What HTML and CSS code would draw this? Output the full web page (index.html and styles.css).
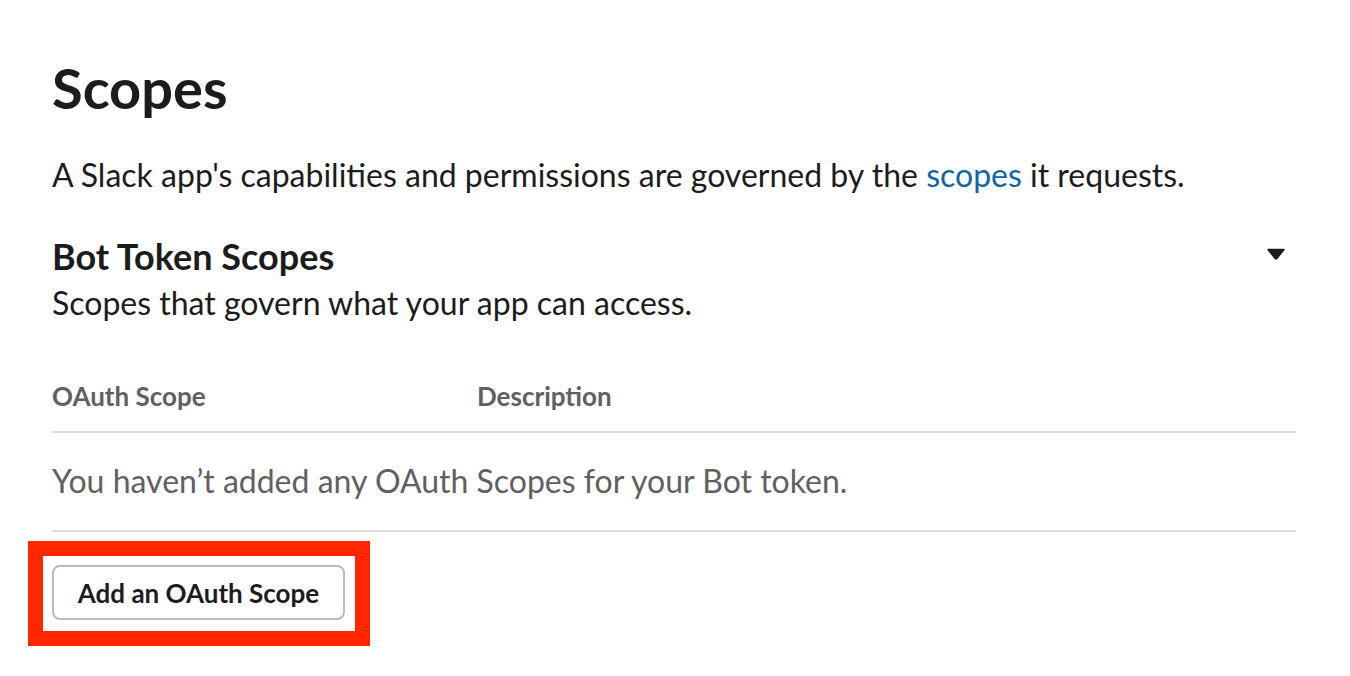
FILE: index.html
```html
<!DOCTYPE html>
<html>
<head>
<meta charset="utf-8">
<link rel="stylesheet" href="styles.css">
</head>
<body>
<main class="page">
  <h1 class="title">Scopes</h1>
  <p class="intro">A Slack app's capabilities and permissions are governed by the <a class="link" href="#">scopes</a> it requests.</p>
  <section class="section">
    <div class="section-head">
      <div class="section-text">
        <h2 class="section-title">Bot Token Scopes</h2>
        <p class="section-sub">Scopes that govern what your app can access.</p>
      </div>
      <span class="caret" aria-hidden="true">
        <svg width="20" height="12" viewBox="0 0 20 12"><path d="M2 1.5 H18 L10.8 10.5 Q10 11.3 9.2 10.5 Z" fill="#1d1c1d" stroke="#1d1c1d" stroke-width="1.5" stroke-linejoin="round"/></svg>
      </span>
    </div>
    <div class="table">
      <div class="table-head">
        <span class="col-scope">OAuth Scope</span>
        <span class="col-desc">Description</span>
      </div>
      <div class="table-empty">You haven’t added any OAuth Scopes for your Bot token.</div>
    </div>
    <div class="highlight">
      <button class="btn">Add an OAuth Scope</button>
    </div>
  </section>
</main>
</body>
</html>
```

FILE: styles.css
```css
* { box-sizing: border-box; }
html, body { margin: 0; padding: 0; background: #fff; }
body {
  font-family: Lato, "Open Sans", "Liberation Sans", sans-serif;
  color: #1d1c1d;
}
.page {
  width: 1244px;
  margin-left: 52px;
  padding-top: 54px;
}
.title {
  margin: 0;
  font-size: 56px;
  font-weight: 700;
  line-height: 68px;
}
.intro {
  margin: 31px 0 0;
  font-size: 32px;
  line-height: 44px;
}
.link { color: #1264a3; text-decoration: none; }
.section { margin-top: 37px; }
.section-head {
  display: flex;
  justify-content: space-between;
  align-items: flex-start;
}
.section-title {
  margin: 0;
  font-size: 36px;
  font-weight: 700;
  line-height: 44px;
}
.section-sub {
  margin: 5px 0 0;
  font-size: 32px;
  line-height: 40px;
}
.caret {
  display: flex;
  margin-top: 14px;
  margin-right: 10px;
}
.table { margin-top: 57px; }
.table-head {
  display: flex;
  font-size: 26px;
  font-weight: 700;
  color: #616061;
  line-height: 32px;
  padding-bottom: 19px;
  border-bottom: 2px solid #dddddd;
}
.col-scope { width: 425px; }
.table-empty {
  font-size: 32px;
  color: #616061;
  line-height: 40px;
  padding: 28px 0 29px;
  border-bottom: 2px solid #dddddd;
}
.highlight {
  display: inline-block;
  margin: 9px 0 0 -24px;
  border: 15px solid #ff2600;
  padding: 9px 10px 11px 9px;
}
.btn {
  display: block;
  width: 293px;
  height: 55px;
  font-family: inherit;
  font-size: 26px;
  font-weight: 700;
  color: #1d1c1d;
  background: #fff;
  border: 2px solid #bbbbbb;
  border-radius: 8px;
  padding: 0;
}
```
